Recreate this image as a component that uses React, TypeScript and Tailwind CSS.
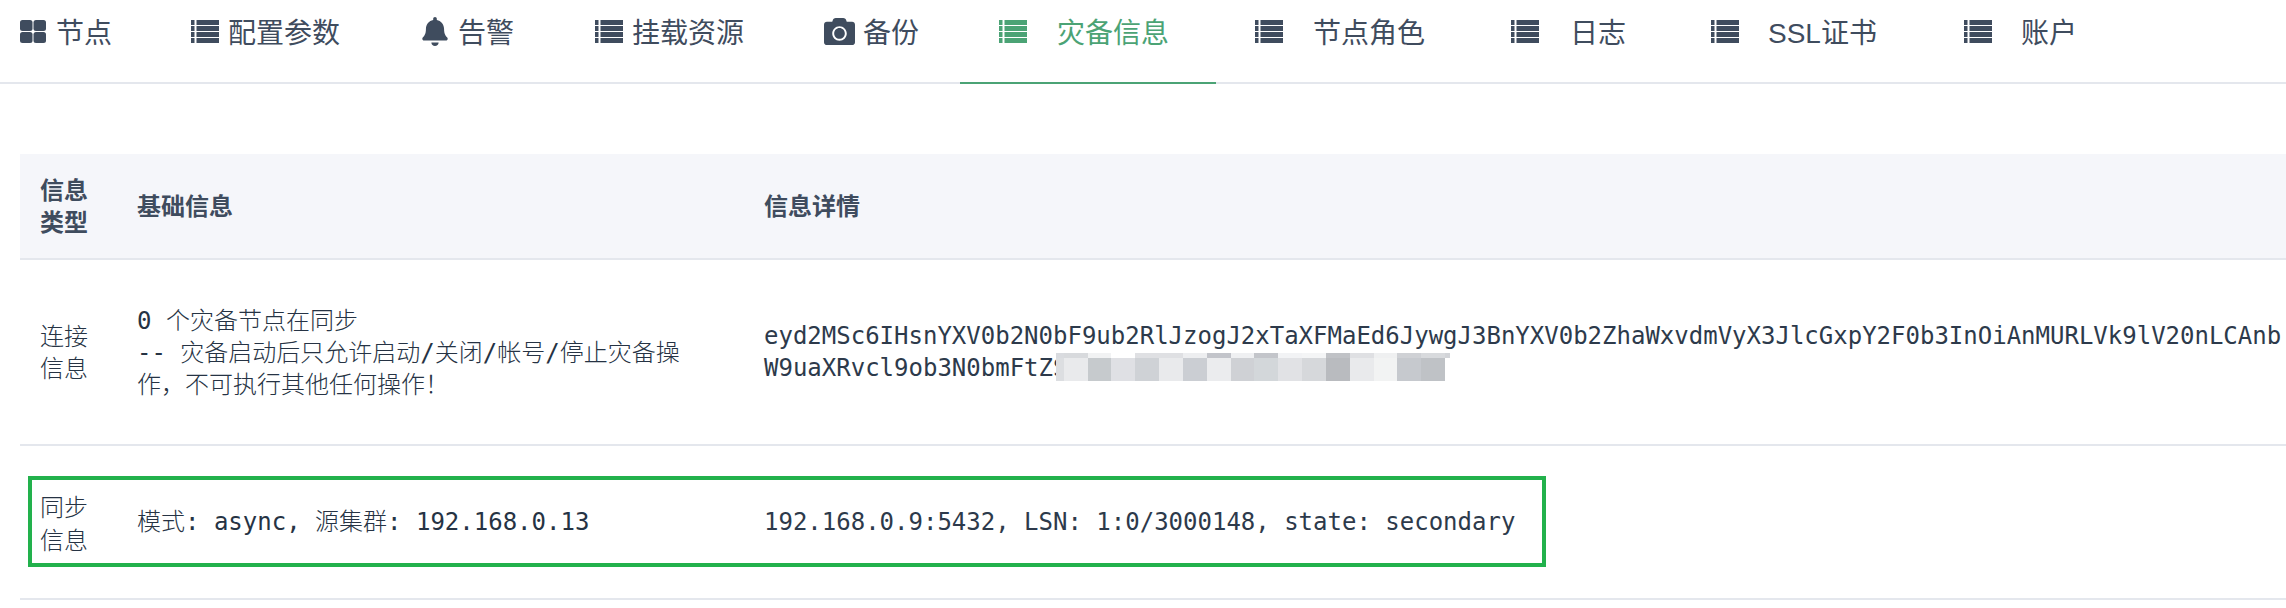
import { FaBell, FaCamera } from "react-icons/fa";

const sans = "font-['Liberation_Sans','Noto_Sans_CJK_SC',sans-serif]";
const mono = "font-['DejaVu_Sans_Mono','Noto_Sans_CJK_SC',monospace]";

function GridIcon() {
  return (
    <svg viewBox="0 0 26 23" className="w-[26px] h-[23px] fill-current shrink-0">
      <rect x="0" y="0" width="12.5" height="11" rx="2.5" />
      <rect x="13.5" y="0" width="12.5" height="11" rx="2.5" />
      <rect x="0" y="12" width="12.5" height="11" rx="2.5" />
      <rect x="13.5" y="12" width="12.5" height="11" rx="2.5" />
    </svg>
  );
}

function ListIcon() {
  const rows = [0, 6, 12, 18];
  return (
    <svg viewBox="0 0 28 23" className="w-7 h-[23px] fill-current shrink-0">
      {rows.map((y) => (
        <g key={y}>
          <rect x="0" y={y} width="3.5" height="5" />
          <rect x="5.5" y={y} width="22.5" height="5" />
        </g>
      ))}
    </svg>
  );
}

// pixelated patch that hides the rest of the token: [width, top colour, bottom colour]
const mosaic: [number, string, string][] = [
  [8, "#d9dbdf", "#dcdee1"],
  [24, "#d8dadd", "#e9eaec"],
  [23, "#f1f2f3", "#c6cacd"],
  [24, "#ffffff", "#dfe0e4"],
  [24, "#dfe0e3", "#cfd2d6"],
  [24, "#dfe0e3", "#e9eaec"],
  [24, "#edeef0", "#cbced3"],
  [24, "#c2c4ca", "#ebecee"],
  [23, "#eff0f2", "#cfd1d5"],
  [24, "#c3c5ca", "#d3d7da"],
  [24, "#f2f3f5", "#e1e2e5"],
  [24, "#f4f5f6", "#d6d8db"],
  [24, "#c0c2c6", "#b9bbbf"],
  [24, "#dfe0e3", "#e9eaec"],
  [23, "#eff0f1", "#f2f3f3"],
  [24, "#cfd1d5", "#c6c9ce"],
  [24, "#d8dadd", "#bfc2c6"],
];

function Mosaic() {
  let x = 0;
  return (
    <svg viewBox="0 0 394 28" className="absolute left-[292px] top-px w-[394px] h-7">
      {mosaic.map(([w, top, bottom]) => {
        const left = x;
        x += w;
        return (
          <g key={left}>
            <rect x={left} y="0" width={w} height="5" fill={top} />
            <rect x={left} y="5" width={w} height="23" fill={bottom} />
          </g>
        );
      })}
      <rect x={x} y="0" width="5" height="5" fill="#d2d4d8" />
    </svg>
  );
}

export default function App() {
  return (
    <div className={`h-[608px] bg-white text-[#2d3a4b] overflow-hidden ${sans}`}>
      <div className="flex h-[84px] pb-[2px] border-b-2 border-[#e4e7ed] text-[28px] text-[#3f4c5e]">
        <div className="flex items-center h-[63px] pl-5 w-[191px] gap-[10px]"><GridIcon /><span className="mt-[5px]">节点</span></div>
        <div className="flex items-center h-[63px] w-[231px] gap-[9px]"><ListIcon /><span className="mt-[5px]">配置参数</span></div>
        <div className="flex items-center h-[63px] w-[173px] gap-[10px]"><FaBell className="w-[26px] h-[29px] shrink-0" /><span className="mt-[5px]">告警</span></div>
        <div className="flex items-center h-[63px] w-[229px] gap-[9px]"><ListIcon /><span className="mt-[5px]">挂载资源</span></div>
        <div className="flex items-center h-[63px] w-[136px] gap-2"><FaCamera className="w-[31px] h-[31px] shrink-0" /><span className="mt-[5px]">备份</span></div>
        <div className="flex items-start w-[256px] h-[84px] border-b-2 border-[#4ba375] text-[#4ba375]">
          <div className="flex items-center h-[63px] pl-[39px] gap-[30px]"><ListIcon /><span className="mt-[5px]">灾备信息</span></div>
        </div>
        <div className="flex items-center h-[63px] w-[256px] pl-[39px] gap-[30px]"><ListIcon /><span className="mt-[5px]">节点角色</span></div>
        <div className="flex items-center h-[63px] w-[200px] pl-[39px] gap-[31px]"><ListIcon /><span className="mt-[5px]">日志</span></div>
        <div className="flex items-center h-[63px] w-[253px] pl-[39px] gap-[29px]"><ListIcon /><span className="mt-[5px]">SSL证书</span></div>
        <div className="flex items-center h-[63px] pl-[39px] gap-[29px]"><ListIcon /><span className="mt-[5px]">账户</span></div>
      </div>
      <div className="ml-5 mt-[70px]">
        <div className="flex h-[106px] pt-[2px] items-center bg-[#f5f6fa] border-b-2 border-[#e4e7ed] font-bold text-[24px] leading-[32px] text-[#3f4c5e]">
          <div className="w-[117px] pl-5">信息<br />类型</div>
          <div className="w-[627px]">基础信息</div>
          <div>信息详情</div>
        </div>
        <div className="flex h-[186px] items-center border-b-2 border-[#e4e7ed] text-[24px] leading-[32px]">
          <div className="w-[117px] pl-5 pt-[2px] font-light text-[#263344]">连接<br />信息</div>
          <div className={`w-[627px] pt-[2px] pr-[80px] font-light text-[#263344] ${mono}`}>0 个灾备节点在同步<br />-- 灾备启动后只允许启动/关闭/帐号/停止灾备操作，不可执行其他任何操作！</div>
          <div className={`flex-1 min-w-0 ${mono}`}>
            <div className="whitespace-nowrap">eyd2MSc6IHsnYXV0b2N0bF9ub2RlJzogJ2xTaXFMaEd6JywgJ3BnYXV0b2ZhaWxvdmVyX3JlcGxpY2F0b3InOiAnMURLVk9lV20nLCAnb</div>
            <div className="relative whitespace-nowrap">W9uaXRvcl9ob3N0bmFtZS<Mosaic /></div>
          </div>
        </div>
        <div className="relative flex h-[154px] items-center border-b-2 border-[#e4e7ed] text-[24px] leading-[32px]">
          <div className="w-[117px] pl-5 pt-1 leading-[33px] font-light text-[#263344]">同步<br />信息</div>
          <div className={`w-[627px] font-light text-[#263344] ${mono}`}>模式: async, 源集群: 192.168.0.13</div>
          <div className={`flex-1 min-w-0 ${mono}`}>192.168.0.9:5432, LSN: 1:0/3000148, state: secondary</div>
          {/* annotation frame drawn on top of the row */}
          <div className="absolute left-2 top-[30px] w-[1518px] h-[91px] border-4 border-[#22b14c]" />
        </div>
      </div>
    </div>
  );
}
